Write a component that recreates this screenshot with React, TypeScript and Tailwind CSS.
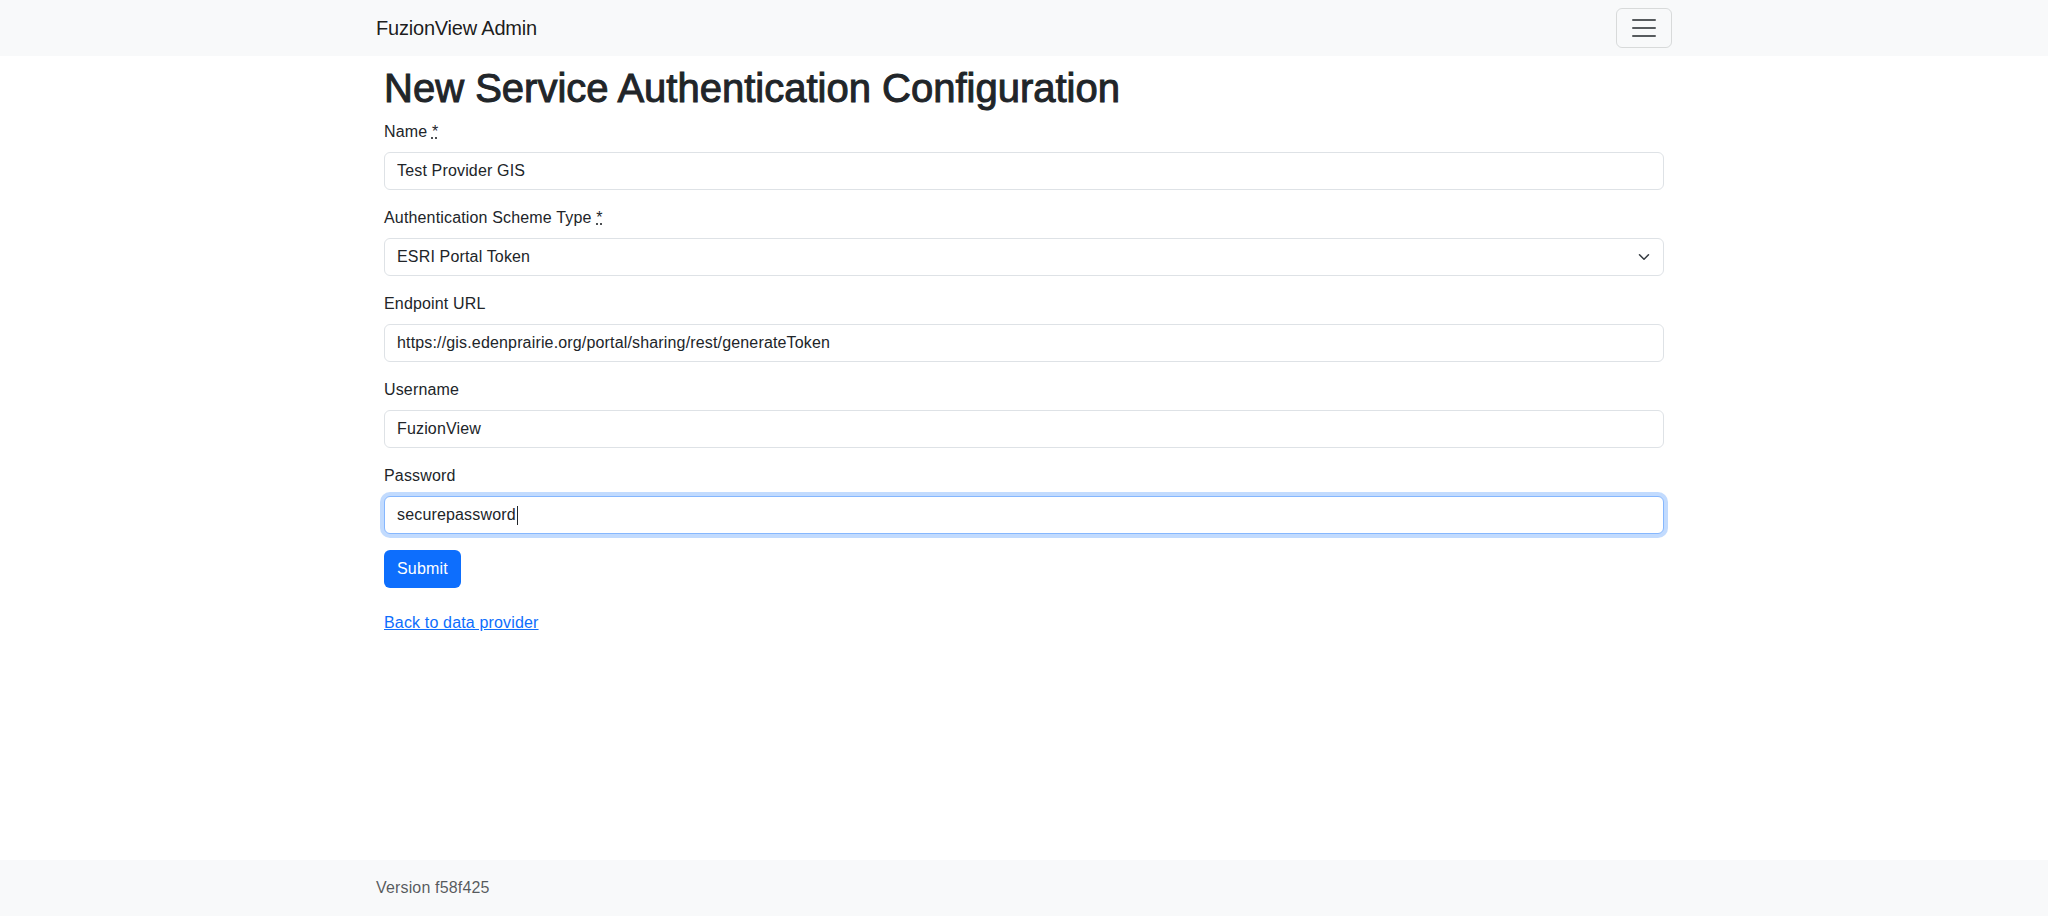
import React from "react";

const font = { fontFamily: '"Liberation Sans", Arial, sans-serif' };

function Label({ text, required }: { text: string; required?: boolean }) {
  return (
    <label className="mb-2 block text-[16px] leading-6 text-[#212529]">
      {text}
      {required && (
        <>
          {" "}
          <abbr title="required" style={{ textDecorationLine: "underline", textDecorationStyle: "dotted" }}>
            *
          </abbr>
        </>
      )}
    </label>
  );
}

function TextInput({ value }: { value: string }) {
  return (
    <input
      type="text"
      defaultValue={value}
      readOnly
      className="block h-[38px] w-full rounded-[6px] border border-[#dee2e6] bg-white px-3 py-[6px] text-[16px] leading-6 tracking-[0.01em] text-[#212529] outline-none"
      style={font}
    />
  );
}

export default function App() {
  return (
    <div className="flex min-h-[916px] flex-col bg-white text-[#212529]" style={font}>
      <nav className="bg-[#f8f9fa] py-2">
        <div className="mx-auto flex w-[1320px] items-center justify-between px-3">
          <a className="py-[5px] text-[20px] leading-[30px] tracking-[-0.01em] text-[rgba(0,0,0,0.9)]">FuzionView Admin</a>
          <button className="flex h-10 w-[56px] items-center justify-center rounded-[6px] border border-[rgba(33,37,41,0.15)]">
            <svg width="30" height="30" viewBox="0 0 30 30">
              <path d="M4 7h22M4 15h22M4 23h22" stroke="rgba(33,37,41,0.75)" strokeWidth="2" strokeLinecap="round" strokeMiterlimit="10" />
            </svg>
          </button>
        </div>
      </nav>

      <main className="flex-1 tracking-[0.01em]">
        <div className="mx-auto w-[1320px] px-5 pt-2">
          <h1 className="mb-2 text-[40px] font-medium leading-[48px] tracking-normal text-[#212529] [-webkit-text-stroke:1px_#212529]">
            New Service Authentication Configuration
          </h1>
          <form>
            <div className="mb-4">
              <Label text="Name" required />
              <TextInput value="Test Provider GIS" />
            </div>
            <div className="mb-4">
              <Label text="Authentication Scheme Type" required />
              <div className="relative">
                <div className="block h-[38px] w-full rounded-[6px] border border-[#dee2e6] bg-white py-[6px] pl-3 pr-9 text-[16px] leading-6 text-[#212529]">
                  ESRI Portal Token
                </div>
                <svg
                  className="pointer-events-none absolute right-3 top-1/2 -translate-y-1/2"
                  width="16"
                  height="12"
                  viewBox="0 0 16 16"
                >
                  <path d="m2 5 6 6 6-6" fill="none" stroke="#343a40" strokeWidth="2" strokeLinecap="round" strokeLinejoin="round" />
                </svg>
              </div>
            </div>
            <div className="mb-4">
              <Label text="Endpoint URL" />
              <TextInput value="https://gis.edenprairie.org/portal/sharing/rest/generateToken" />
            </div>
            <div className="mb-4">
              <Label text="Username" />
              <TextInput value="FuzionView" />
            </div>
            <div className="mb-4">
              <Label text="Password" />
              <div className="flex h-[38px] w-full items-center rounded-[6px] border border-[#86b7fe] bg-white px-3 py-[6px] text-[16px] leading-6 text-[#212529] shadow-[0_0_0_4px_rgba(13,110,253,0.25)]">
                <span>securepassword</span>
                <span className="ml-[1px] inline-block h-[19px] w-px bg-[#212529]" />
              </div>
            </div>
            <button
              type="button"
              className="h-[38px] rounded-[6px] bg-[#0d6efd] px-[13px] text-[16px] leading-6 text-white"
            >
              Submit
            </button>
          </form>
          <div className="mt-[23px]">
            <a className="text-[16px] leading-6 text-[#0d6efd] underline">Back to data provider</a>
          </div>
        </div>
      </main>

      <footer className="bg-[#f8f9fa] py-4 tracking-[0.01em]">
        <div className="mx-auto w-[1320px] px-3">
          <span className="text-[16px] leading-6 text-[rgba(33,37,41,0.75)]">Version f58f425</span>
        </div>
      </footer>
    </div>
  );
}
